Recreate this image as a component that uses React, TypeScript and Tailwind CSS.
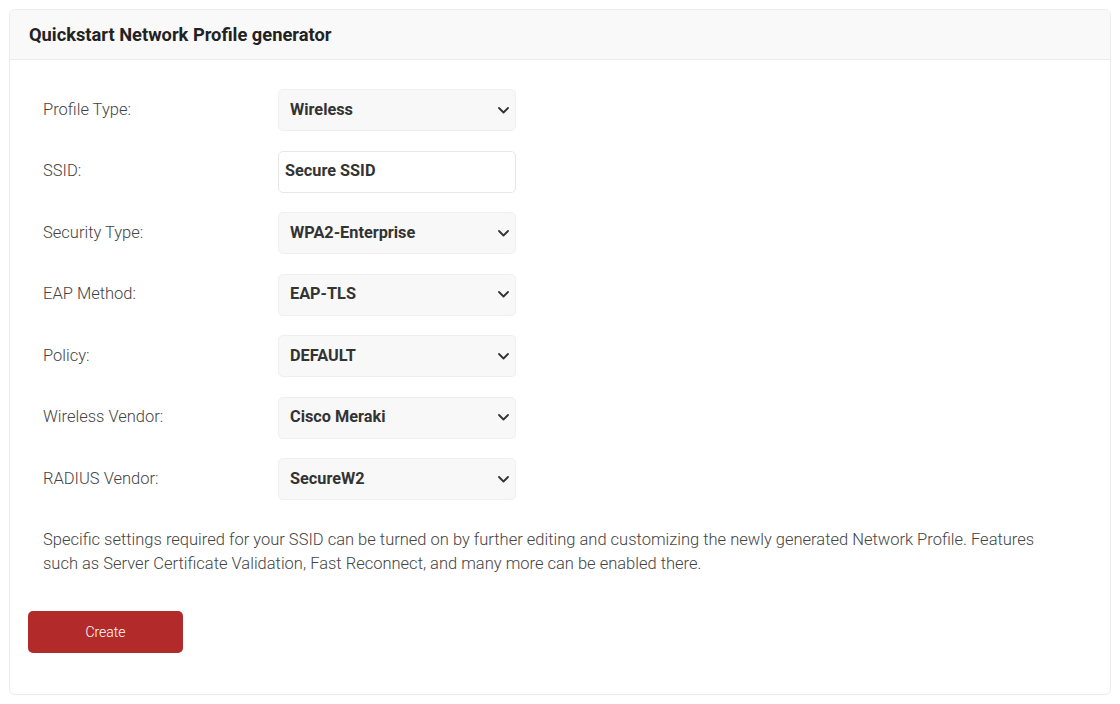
import React from "react";

const rows: { label: string; value: string; input?: boolean }[] = [
  { label: "Profile Type:", value: "Wireless" },
  { label: "SSID:", value: "Secure SSID", input: true },
  { label: "Security Type:", value: "WPA2-Enterprise" },
  { label: "EAP Method:", value: "EAP-TLS" },
  { label: "Policy:", value: "DEFAULT" },
  { label: "Wireless Vendor:", value: "Cisco Meraki" },
  { label: "RADIUS Vendor:", value: "SecureW2" },
];

function Chevron() {
  return (
    <svg width="11" height="7" viewBox="0 0 11 7" fill="none">
      <path d="M1 1 L5.5 5.5 L10 1" stroke="#333" strokeWidth="1.8" strokeLinecap="round" strokeLinejoin="round" />
    </svg>
  );
}

export default function App() {
  return (
    <div className="min-h-[704px] bg-white p-[9px] font-['Roboto',sans-serif]">
      <div className="w-[1102px] h-[686px] rounded-[6px] border border-[#ececec] flex flex-col overflow-hidden">
        <div className="h-[50px] bg-[#f9f9f9] border-b border-[#ececec] flex items-center pl-[19px] pt-[1px]">
          <h1 className="text-[18.3px] font-bold text-[#222]">Quickstart Network Profile generator</h1>
        </div>
        <div className="flex flex-col pt-[29px]">
          <div className="flex flex-col gap-[19.5px] pl-[33px]">
            {rows.map((r) => (
              <div key={r.label} className="flex items-center h-[42px]">
                <div className="w-[235px] text-[16.5px] font-light text-[#444]">{r.label}</div>
                {r.input ? (
                  <div className="w-[238px] h-[42px] rounded-[5px] border border-[#e6e6e6] bg-white flex items-center pl-[6px] text-[16.3px] font-bold text-[#333]">
                    {r.value}
                  </div>
                ) : (
                  <div className="w-[238px] h-[42px] rounded-[5px] border border-[#efefef] bg-[#f8f8f8] flex items-center justify-between pl-[11px] pr-[6px] text-[16.3px] font-bold text-[#333]">
                    <span>{r.value}</span>
                    <Chevron />
                  </div>
                )}
              </div>
            ))}
          </div>
          <p className="pl-[33px] pr-[50px] mt-[28px] text-[16.5px] font-light leading-[24px] text-[#444]">
            Specific settings required for your SSID can be turned on by further editing and customizing the newly generated Network Profile. Features such as Server Certificate Validation, Fast Reconnect, and many more can be enabled there.
          </p>
          <div className="pl-[18px] mt-[35px]">
            <button className="w-[155px] h-[42px] rounded-[5px] bg-[#b22b2a] text-white text-[14px] font-light">Create</button>
          </div>
        </div>
      </div>
    </div>
  );
}
